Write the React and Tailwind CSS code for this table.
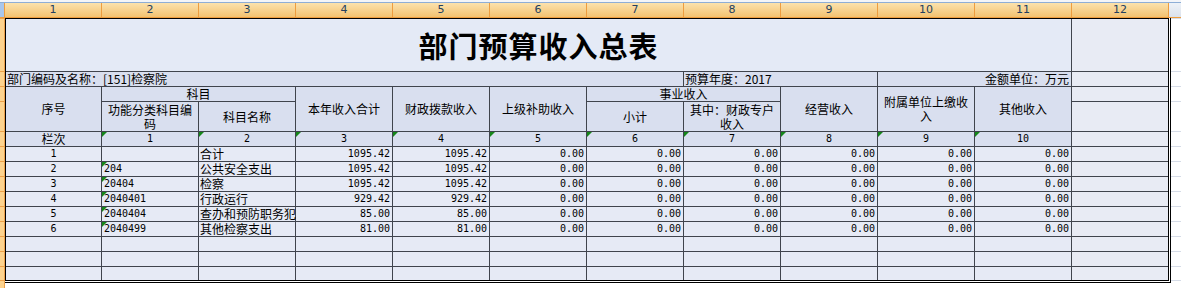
const COLS = [1, 2, 3, 4, 5, 6, 7, 8, 9, 10, 11, 12];

const DATA = [
  ["1", "", "合计", "1095.42", "1095.42"],
  ["2", "204", "公共安全支出", "1095.42", "1095.42"],
  ["3", "20404", "检察", "1095.42", "1095.42"],
  ["4", "2040401", "行政运行", "929.42", "929.42"],
  ["5", "2040404", "查办和预防职务犯", "85.00", "85.00"],
  ["6", "2040499", "其他检察支出", "81.00", "81.00"],
];

const ZEROS = ["0.00", "0.00", "0.00", "0.00", "0.00", "0.00"];

const Num = ({ children }) => (
  <span className="font-['DejaVu_Sans_Mono',monospace] text-[10px]">{children}</span>
);

const Flag = () => (
  <span className="absolute left-0 top-0 h-0 w-0 border-t-[5px] border-r-[5px] border-t-[#16861a] border-r-transparent" />
);

const App = () => {
  return (
    <div className="w-[1181px] h-[288px] overflow-hidden bg-white text-black text-[12px] leading-[14px] font-['Noto_Sans_CJK_SC',sans-serif]">
      <div className="h-[2px] bg-[#f3f5f9]" />

      {/* column letters */}
      <div className="flex h-[16px] border-y border-t-[#8eaed6] border-b-[#ee9d3f]">
        <div className="w-[5px] bg-[#a9c6ec] border-r border-[#ee9d3f]" />
        {COLS.map((n) => (
          <div
            key={n}
            className="w-[97px] flex items-center justify-center border-r border-[#ee9d3f] bg-gradient-to-b from-[#fbe2ad] to-[#f3c270] text-[#23405f] text-[11px] font-['DejaVu_Sans',sans-serif]"
          >
            {n}
          </div>
        ))}
        <div className="flex-1 bg-gradient-to-b from-[#eef2f8] to-[#dbe2ec]" />
      </div>

      <div className="flex items-start">
        {/* row header strip */}
        <div className="w-[5px] pr-px grid grid-rows-[52px_14px_14px_29px_14px_repeat(8,14px)_13px_14px] gap-y-px bg-[#eca04a] border-t border-[#eca04a]">
          {Array.from({ length: 15 }).map((_, i) => (
            <div key={i} className="bg-[#fdd38e]" />
          ))}
        </div>

        {/* sheet */}
        <div className="border-r-[3px] border-b-[3px] border-double border-black">
          <div className="grid grid-cols-[95px_repeat(11,96px)] grid-rows-[52px_14px_14px_29px_14px_repeat(8,14px)_13px] gap-px bg-[#40444d] border-l border-t border-black">
            {/* title */}
            <div className="col-span-11 flex items-center justify-center bg-[#e4eaf6] text-[29px] leading-none font-bold tracking-[1px]">
              部门预算收入总表
            </div>
            <div className="bg-[#e8ebf4]" />

            {/* department row */}
            <div className="col-span-7 flex items-center bg-[#d9dfef] px-px whitespace-nowrap">
              部门编码及名称：[151]检察院
            </div>
            <div className="col-span-2 flex items-center bg-[#d9dfef] px-px whitespace-nowrap">
              预算年度：2017
            </div>
            <div className="col-span-2 flex items-center justify-end bg-[#d9dfef] px-[2px] whitespace-nowrap">
              金额单位：万元
            </div>
            <div className="bg-[#e8ebf4]" />

            {/* header rows */}
            <div className="row-span-2 flex items-center justify-center bg-[#d9dfef]">序号</div>
            <div className="col-span-2 flex items-center justify-center bg-[#d9dfef]">科目</div>
            <div className="row-span-2 flex items-center justify-center bg-[#d9dfef]">本年收入合计</div>
            <div className="row-span-2 flex items-center justify-center bg-[#d9dfef]">财政拨款收入</div>
            <div className="row-span-2 flex items-center justify-center bg-[#d9dfef]">上级补助收入</div>
            <div className="col-span-2 flex items-center justify-center bg-[#d9dfef]">事业收入</div>
            <div className="row-span-2 flex items-center justify-center bg-[#d9dfef]">经营收入</div>
            <div className="row-span-2 flex flex-col items-center justify-center bg-[#d9dfef]">
              <span>附属单位上缴收</span>
              <span>入</span>
            </div>
            <div className="row-span-2 flex items-center justify-center bg-[#d9dfef]">其他收入</div>
            <div className="bg-[#e8ebf4]" />
            <div className="flex flex-col items-center justify-center bg-[#d9dfef]">
              <span>功能分类科目编</span>
              <span>码</span>
            </div>
            <div className="flex items-center justify-center bg-[#d9dfef]">科目名称</div>
            <div className="flex items-center justify-center bg-[#d9dfef]">小计</div>
            <div className="flex flex-col items-center justify-center bg-[#d9dfef]">
              <span>其中：财政专户</span>
              <span>收入</span>
            </div>
            <div className="bg-[#e8ebf4]" />

            {/* column index row */}
            <div className="flex items-center justify-center bg-[#d9dfef]">栏次</div>
            {[1, 2, 3, 4, 5, 6, 7, 8, 9, 10].map((n) => (
              <div key={n} className="relative flex items-center justify-center bg-[#d9dfef]">
                <Flag />
                <Num>{n}</Num>
              </div>
            ))}
            <div className="bg-[#e8ebf4]" />

            {/* data rows */}
            {DATA.map(([no, code, name, total, fin]) => (
              <div key={no} className="contents">
                <div className="flex items-center justify-center bg-[#e6eaf5]">
                  <Num>{no}</Num>
                </div>
                <div className="relative flex items-center bg-[#e6eaf5] px-[2px]">
                  {code && <Flag />}
                  <Num>{code}</Num>
                </div>
                <div className="flex items-center whitespace-nowrap bg-[#e6eaf5] px-px">
                  {name}
                </div>
                {[total, fin, ...ZEROS].map((v, i) => (
                  <div key={i} className="flex items-center justify-end bg-[#e6eaf5] px-[2px]">
                    <Num>{v}</Num>
                  </div>
                ))}
                <div className="bg-[#e8ebf4]" />
              </div>
            ))}

            {/* empty rows */}
            {Array.from({ length: 36 }).map((_, i) => (
              <div key={i} className={i % 12 === 11 ? "bg-[#e8ebf4]" : "bg-[#e6eaf5]"} />
            ))}
          </div>
        </div>

        {/* faint grid to the right */}
        <div className="flex-1 grid grid-rows-[52px_14px_14px_29px_14px_repeat(8,14px)_13px_14px] gap-y-px bg-[#d6dce7] border-t border-[#d6dce7]">
          {Array.from({ length: 15 }).map((_, i) => (
            <div key={i} className="bg-white" />
          ))}
        </div>
      </div>

      {/* faint grid below */}
      <div className="flex h-[8px]">
        <div className="w-[5px] bg-[#fdd38e] border-r border-[#eca04a]" />
        {COLS.map((n) => (
          <div key={n} className="w-[97px] border-r border-[#d6dce7] bg-white" />
        ))}
      </div>
    </div>
  );
};

export default App;
